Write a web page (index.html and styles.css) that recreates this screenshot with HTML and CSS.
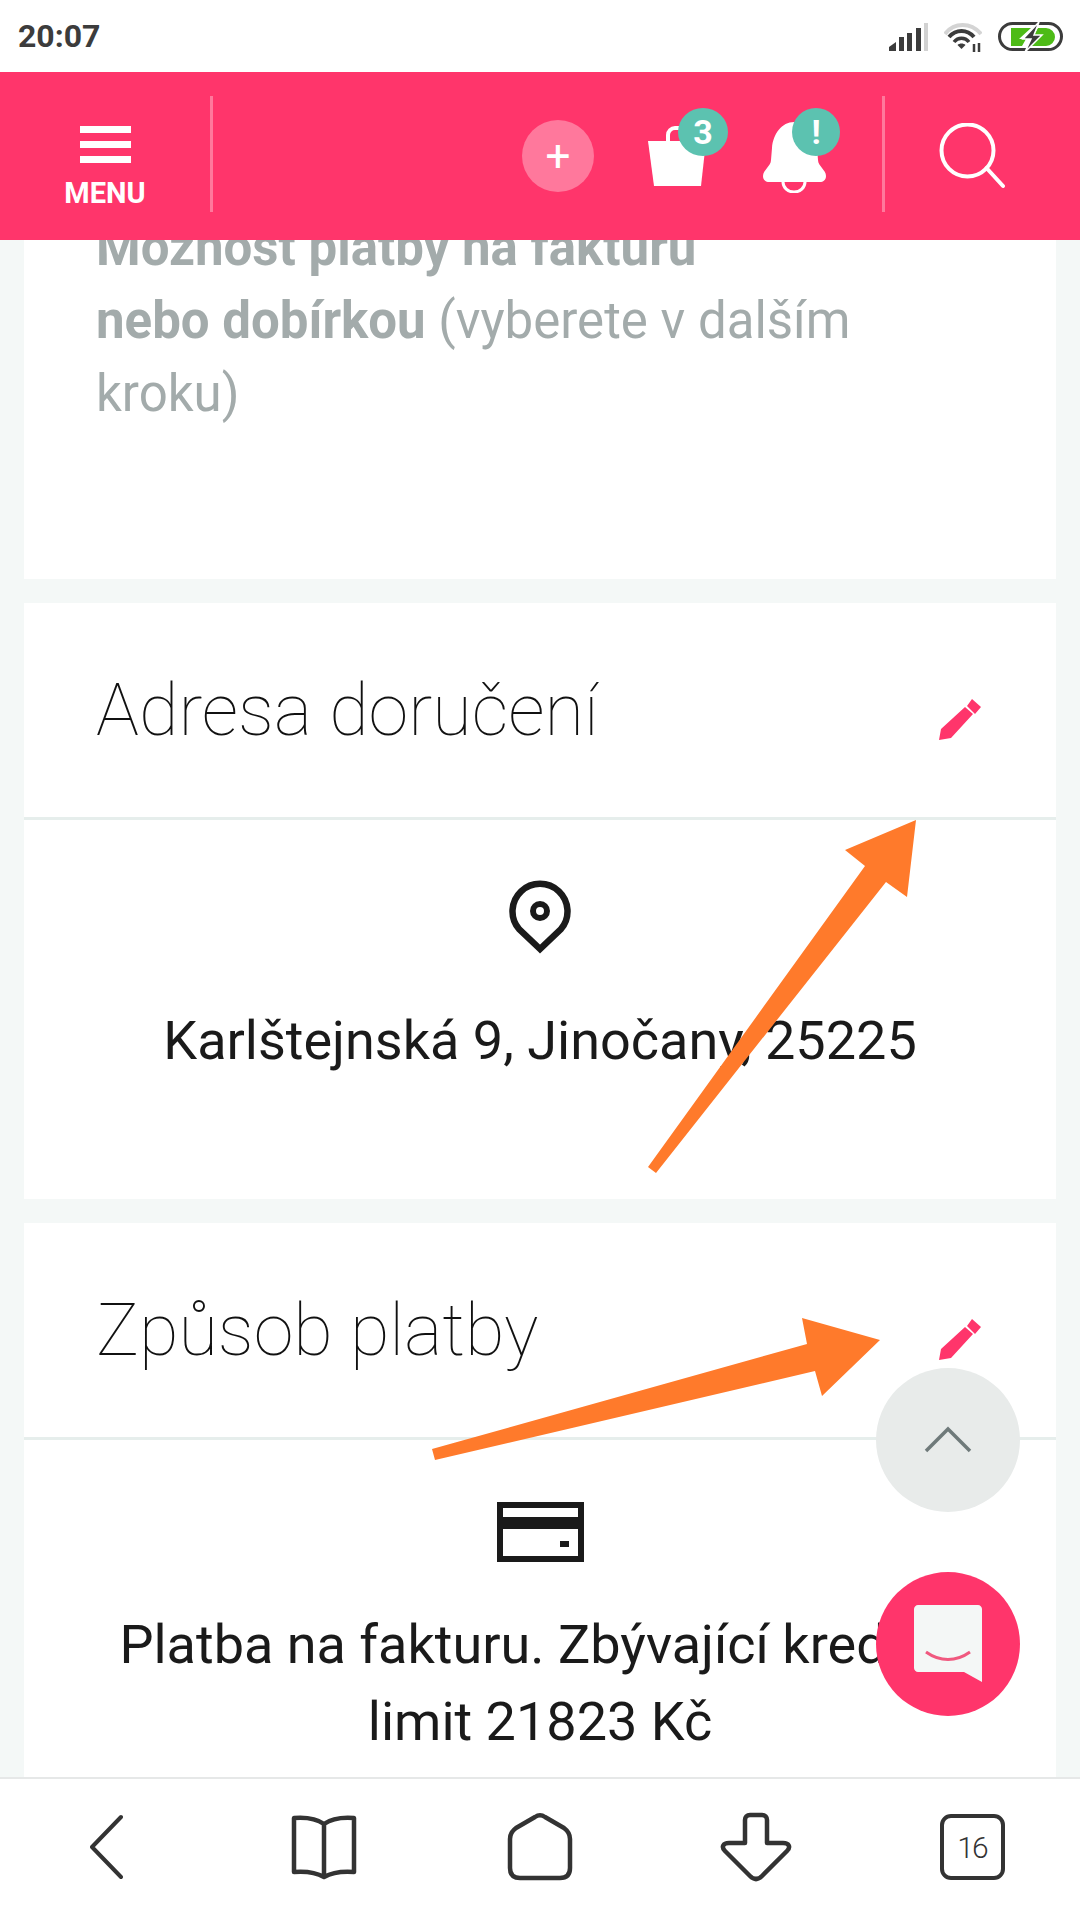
FILE: index.html
```html
<!DOCTYPE html>
<html lang="cs">
<head>
  <meta charset="UTF-8">
  <meta name="viewport" content="width=device-width, initial-scale=1">
  <title>Pokladna</title>
  <link rel="stylesheet" href="styles.css">
</head>
<body>
  <div class="phone">
    <div class="status-bar">
      <span class="time">20:07</span>
      <div class="status-icons">
        <svg width="39" height="28" viewBox="0 0 39 28">
          <path d="M0 28v-4l7-5v9z" fill="#3c3c3c"/>
          <rect x="10" y="14" width="5" height="14" fill="#3c3c3c"/>
          <rect x="18" y="10" width="5" height="18" fill="#3c3c3c"/>
          <rect x="27" y="5" width="5" height="23" fill="#3c3c3c"/>
          <rect x="35" y="0" width="4" height="28" fill="#d2d2d2"/>
        </svg>
        <svg width="38" height="30" viewBox="0 0 38 30" fill="none">
          <path d="M1 12C10 0 27 0 37 12" stroke="#d4d4d4" stroke-width="4"/>
          <path d="M5 15C12 7 23 7 30 15" stroke="#3c3c3c" stroke-width="4"/>
          <path d="M10 20C14 15 21 15 25 20" stroke="#3c3c3c" stroke-width="3.500"/>
          <path d="M17.500 27l-4-4c2-2 6-2 8 0z" fill="#3c3c3c"/>
          <path d="M30 30v-8M35 30v-9" stroke="#3c3c3c" stroke-width="2.500"/>
        </svg>
        <svg width="65" height="30" viewBox="0 0 65 30" fill="none">
          <rect x="1.500" y="1.500" width="62" height="26" rx="13" stroke="#3c3c3c" stroke-width="3"/>
          <path d="M13 6H33L21 17H28L24 24H13zM40 6H48a9 9 0 0 1 0 18H33L44 13H36z" fill="#4dbb16"/>
          <path d="M41 0L25 17H33L27 30L44 13H36z" fill="#3c3c3c" stroke="#fff" stroke-width="1.500"/>
        </svg>
      </div>
    </div>

    <header class="top-bar">
      <div class="menu-btn">
        <div class="burger"><span></span><span></span><span></span></div>
        <span class="menu-label">MENU</span>
      </div>
      <div class="bar-divider"></div>
      <div class="bar-actions">
        <div class="add-btn">+</div>
        <div class="action action-bag">
          <svg width="58" height="60" viewBox="0 0 58 60" fill="none">
            <path d="M20 16V9a7 7 0 0 1 7-7h12" stroke="#fff" stroke-width="4"/>
            <path d="M0 15h58l-5 45H6z" fill="#fff"/>
          </svg>
          <span class="badge badge-bag">3</span>
        </div>
        <div class="action action-bell">
          <svg width="63" height="73" viewBox="0 0 63 73" fill="none">
            <path d="M31 2C19 2 10 14 9 28L8 40C8 46 0 50 0 56C0 60 3 62 6 62H57C60 62 63 60 63 56C63 50 55 46 55 40L54 28C53 14 43 2 31 2Z" fill="#fff"/>
            <path d="M20 62a11 10 0 0 0 22 0" stroke="#fff" stroke-width="3"/>
          </svg>
          <span class="badge badge-bell">!</span>
        </div>
      </div>
      <div class="bar-divider"></div>
      <div class="search-btn">
        <svg width="66" height="66" viewBox="0 0 66 66" fill="none">
          <circle cx="28.500" cy="27.500" r="26" stroke="#fff" stroke-width="4"/>
          <path d="M47.500 45L64 63" stroke="#fff" stroke-width="4" stroke-linecap="round"/>
        </svg>
      </div>
    </header>

    <main class="content">
      <section class="card card-note">
        <p class="note"><strong>Možnost platby na fakturu<br>nebo dobírkou</strong> (vyberete v dalším kroku)</p>
      </section>

      <section class="card">
        <div class="card-head">
          <h2>Adresa doručení</h2>
          <svg class="pencil" width="42" height="41" viewBox="0 0 42 41"><path d="M26 8L34 15 12 39 0 41 2 30zM33 0L42 8 36 15 28 7z" fill="#ff356b"/></svg>
        </div>
        <div class="card-body">
          <svg class="pin" width="62" height="74" viewBox="0 0 62 74" fill="none">
            <path d="M31 69L10 49A27.500 27.500 0 1 1 52 49Z" stroke="#1a1a1a" stroke-width="6.500"/>
            <circle cx="31" cy="31" r="7" stroke="#1a1a1a" stroke-width="6"/>
          </svg>
          <p class="info">Karlštejnská 9, Jinočany, 25225</p>
        </div>
      </section>

      <section class="card">
        <div class="card-head">
          <h2>Způsob platby</h2>
          <svg class="pencil" width="42" height="41" viewBox="0 0 42 41"><path d="M26 8L34 15 12 39 0 41 2 30zM33 0L42 8 36 15 28 7z" fill="#ff356b"/></svg>
        </div>
        <div class="card-body card-body-pay">
          <svg class="credit" width="87" height="60" viewBox="0 0 87 60" fill="none">
            <rect x="3" y="3" width="81" height="54" stroke="#1a1a1a" stroke-width="6"/>
            <rect x="3" y="15" width="81" height="12" fill="#1a1a1a"/>
            <rect x="63" y="39" width="9" height="6" fill="#1a1a1a"/>
          </svg>
          <p class="info">Platba na fakturu. Zbývající kreditní<br>limit 21823 Kč</p>
        </div>
      </section>
    </main>

    <nav class="bottom-bar">
      <svg class="nav-back" width="33" height="66" viewBox="0 0 33 66" fill="none"><path d="M31 3L2 33l29 30" stroke="#333" stroke-width="4" stroke-linecap="round" stroke-linejoin="round"/></svg>
      <svg width="66" height="66" viewBox="0 0 66 66" fill="none"><path d="M33 10C26 5 16 3 3 4V58C16 57 26 59 33 63C40 59 50 57 63 58V4C50 3 40 5 33 10ZM33 10V63" stroke="#333" stroke-width="4.500" stroke-linejoin="round"/></svg>
      <svg width="66" height="68" viewBox="0 0 66 68" fill="none"><path d="M28 4C31 2 35 2 38 4L57 15C61 18 63 21 63 26V55C63 62 59 65 53 65H13C7 65 3 62 3 55V26C3 21 5 18 9 15Z" stroke="#333" stroke-width="4.500" stroke-linejoin="round"/></svg>
      <svg width="72" height="70" viewBox="0 0 72 70" fill="none"><path d="M25 31V8C25 5 27 3 30 3H42C45 3 47 5 47 8V31H63C69 31 71 35 67 39L42 64C38 68 34 68 30 64L5 39C1 35 3 31 9 31Z" stroke="#333" stroke-width="4.500" stroke-linejoin="round"/></svg>
      <div class="tabs">16</div>
    </nav>

    <!-- arrows drawn over the screenshot -->
    <svg class="arrows" width="1080" height="1920" viewBox="0 0 1080 1920">
      <path d="M916 820L845 850L865 866L648 1167L656 1173L886 882L907 897Z" fill="#ff7a2b"/>
      <path d="M880 1340L802 1318L807 1344L432 1449L435 1460L815 1371L822 1396Z" fill="#ff7a2b"/>
    </svg>

    <button class="fab fab-up" type="button">
      <svg width="48" height="28" viewBox="0 0 48 28" fill="none"><path d="M2 25L24 3L46 25" stroke="#6f7a7a" stroke-width="3.500"/></svg>
    </button>
    <button class="fab fab-chat" type="button">
      <svg width="68" height="78" viewBox="0 0 68 78" fill="none">
        <path d="M4 0H64C66 0 68 2 68 4V77L50 67H4C2 67 0 65 0 63V4C0 2 2 0 4 0Z" fill="#f4f7f6"/>
        <path d="M12 47C26 57 42 57 56 47" stroke="#f0597f" stroke-width="3"/>
      </svg>
    </button>
  </div>
</body>
</html>
```

FILE: styles.css
```css
* { box-sizing: border-box; }
body {
  margin: 0;
  font-family: 'Roboto', 'Liberation Sans', sans-serif;
  background: #f4f8f7;
}
.phone {
  position: relative;
  width: 1080px;
  height: 1920px;
  display: flex;
  flex-direction: column;
  overflow: hidden;
}

/* status bar */
.status-bar {
  height: 72px;
  flex: none;
  background: #fff;
  display: flex;
  justify-content: space-between;
  align-items: center;
  padding: 0 17px 0 18px;
}
.time {
  font-size: 32px;
  font-weight: 700;
  color: #3c3c3c;
}
.status-icons {
  display: flex;
  align-items: center;
  gap: 16px;
  margin-top: 1px;
}

/* pink header */
.top-bar {
  height: 168px;
  flex: none;
  background: #ff356b;
  display: flex;
  align-items: center;
  color: #fff;
}
.menu-btn {
  width: 210px;
  display: flex;
  flex-direction: column;
  align-items: center;
  padding-top: 24px;
}
.burger {
  width: 51px;
  display: flex;
  flex-direction: column;
  gap: 8px;
}
.burger span {
  height: 7px;
  background: #fff;
}
.menu-label {
  font-size: 29px;
  font-weight: 700;
  margin-top: 13px;
}
.bar-divider {
  width: 3px;
  height: 116px;
  margin-bottom: 4px;
  background: #ff789c;
  flex: none;
}
.bar-actions {
  flex: 1;
  display: flex;
  justify-content: flex-end;
  align-items: center;
  padding-right: 42px;
}
.add-btn {
  width: 72px;
  height: 72px;
  border-radius: 50%;
  background: #ff789c;
  color: #fff;
  font-size: 44px;
  font-weight: 400;
  display: flex;
  align-items: center;
  justify-content: center;
  margin-right: 54px;
}
.action {
  position: relative;
  display: flex;
}
.action-bag {
  width: 81px;
  margin-right: 34px;
}
.action-bell {
  width: 77px;
}
.badge {
  position: absolute;
  width: 50px;
  height: 48px;
  border-radius: 50%;
  background: #5cc2b0;
  color: #fff;
  font-size: 34px;
  font-weight: 700;
  display: flex;
  align-items: center;
  justify-content: center;
}
.badge-bag {
  left: 30px;
  top: -18px;
}
.badge-bell {
  left: 29px;
  top: -12px;
  width: 48px;
}
.search-btn {
  margin: 0 75px 0 54px;
  display: flex;
}

/* content cards */
.content {
  flex: 1;
  min-height: 0;
  overflow: hidden;
  padding: 0 24px;
  display: flex;
  flex-direction: column;
  gap: 24px;
}
.card {
  flex: none;
  background: #fff;
}
.card-note {
  height: 339px;
  padding: 0 90px 0 72px;
}
.note {
  margin: -29px 0 0;
  font-size: 51px;
  line-height: 73px;
  color: #a3abab;
}
.note strong {
  font-weight: 700;
}
.card-head {
  height: 217px;
  padding: 0 75px 0 72px;
  display: flex;
  justify-content: space-between;
  align-items: center;
  border-bottom: 3px solid #e6eeec;
}
.card-head h2 {
  margin: 0;
  font-size: 72px;
  font-weight: 100;
  color: #111;
}
.pencil {
  margin-top: 18px;
}
.card-body {
  height: 379px;
  padding-top: 60px;
  display: flex;
  flex-direction: column;
  align-items: center;
  text-align: center;
}
.card-body-pay {
  padding-top: 62px;
}
.info {
  margin: 0;
  font-size: 54px;
  line-height: 77px;
  color: #1a1a1a;
}
.pin {
  margin-bottom: 48px;
}
.credit {
  margin-bottom: 44px;
}

/* bottom browser bar */
.bottom-bar {
  height: 143px;
  flex: none;
  background: #fff;
  border-top: 2px solid #e6e8e8;
  display: grid;
  grid-template-columns: repeat(5, 216px);
  justify-items: center;
  align-items: center;
  padding-bottom: 5px;
}
.nav-back {
  margin-right: 4px;
}
.tabs {
  width: 65px;
  height: 66px;
  border: 4.5px solid #333;
  border-radius: 11px;
  font-weight: 300;
  font-size: 30px;
  letter-spacing: -2px;
  color: #333;
  display: flex;
  align-items: center;
  justify-content: center;
}

/* overlays */
.arrows {
  position: absolute;
  left: 0;
  top: 0;
  pointer-events: none;
}
.fab {
  position: absolute;
  left: 876px;
  width: 144px;
  height: 144px;
  border: none;
  border-radius: 50%;
  padding: 0;
  display: flex;
  align-items: center;
  justify-content: center;
}
.fab-up {
  top: 1368px;
  background: #e8ebea;
}
.fab-chat {
  top: 1572px;
  background: #ff356b;
}
```
